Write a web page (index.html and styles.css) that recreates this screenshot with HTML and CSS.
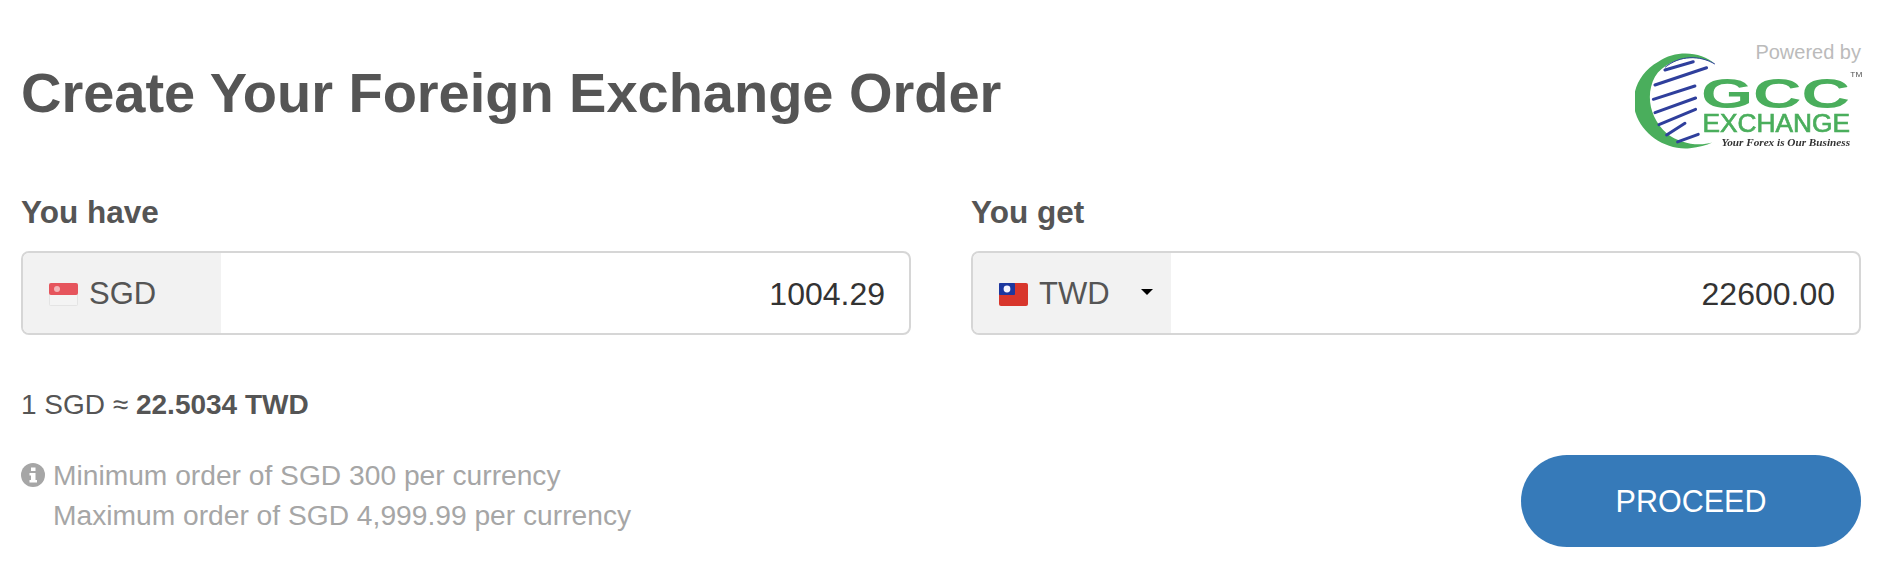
FILE: index.html
```html
<!DOCTYPE html>
<html lang="en">
<head>
    <meta charset="UTF-8">
    <meta name="viewport" content="width=device-width, initial-scale=1.0">
    <title>Create Your Foreign Exchange Order</title>
    <link rel="stylesheet" href="styles.css">
</head>
<body>
    <div class="order">
        <div class="header">
            <h1>Create Your Foreign Exchange Order</h1>
            <div class="powered">
                <span class="powered-text">Powered by</span>
                <svg class="logo" viewBox="100 90 700 300">
                    <path d="M340 132C300 95 225 88 170 125C108 160 85 225 102 280C122 345 195 392 265 385C292 382 315 377 332 368C290 380 235 372 195 340C145 296 130 225 160 170C192 118 280 95 340 132Z" fill="#4aae5c"/>
                    <path d="M190 142C235 105 295 105 340 132" fill="none" stroke="#2f3f9c" stroke-width="3"/>
                    <g stroke="#2f3f9c" stroke-width="9" stroke-linecap="round">
                        <line x1="190" y1="150" x2="275" y2="125"/>
                        <line x1="160" y1="195" x2="315" y2="143"/>
                        <line x1="155" y1="238" x2="280" y2="198"/>
                        <line x1="160" y1="278" x2="282" y2="234"/>
                        <line x1="172" y1="314" x2="282" y2="268"/>
                        <line x1="195" y1="345" x2="250" y2="310"/>
                        <line x1="228" y1="366" x2="290" y2="343"/>
                    </g>
                    <text class="logo-gcc" x="298" y="264" textLength="448" lengthAdjust="spacingAndGlyphs">GCC</text>
                    <text class="logo-exchange" x="303" y="335" textLength="443" lengthAdjust="spacingAndGlyphs">EXCHANGE</text>
                    <text class="logo-tag" x="360" y="378" textLength="386" lengthAdjust="spacingAndGlyphs">Your Forex is Our Business</text>
                    <text class="logo-tm" x="747" y="170" textLength="36" lengthAdjust="spacingAndGlyphs">TM</text>
                </svg>
            </div>
        </div>

        <div class="fields">
            <div class="field">
                <label>You have</label>
                <div class="input-group">
                    <div class="addon">
                        <svg class="flag" viewBox="0 0 29 23">
                            <rect width="29" height="23" rx="2" fill="#e4e4e4"/>
                            <rect x="1" y="12" width="27" height="10" fill="#f4f4f4"/>
                            <rect width="29" height="12" rx="2" fill="#e6555d"/>
                            <circle cx="8" cy="6" r="3" fill="#f3b5b8"/>
                        </svg>
                        <span>SGD</span>
                    </div>
                    <div class="amount">1004.29</div>
                </div>
            </div>
            <div class="field">
                <label>You get</label>
                <div class="input-group">
                    <div class="addon">
                        <svg class="flag" viewBox="0 0 29 23">
                            <rect width="29" height="23" rx="2" fill="#d8362c"/>
                            <rect width="16" height="12" rx="1" fill="#1c379f"/>
                            <circle cx="8" cy="6" r="3.4" fill="#f4f4ff"/>
                        </svg>
                        <span>TWD</span>
                        <span class="caret"></span>
                    </div>
                    <div class="amount">22600.00</div>
                </div>
            </div>
        </div>

        <div class="footer">
            <div class="notes">
                <p class="rate">1 SGD ≈ <b>22.5034 TWD</b></p>
                <div class="limits">
                    <svg class="info" viewBox="0 0 24 24">
                        <circle cx="12" cy="12" r="12" fill="#a6a6a6"/>
                        <rect x="10" y="4.5" width="4.5" height="3.5" fill="#fff"/>
                        <path d="M8.5 10H14.5V17H16V19.5H8.5V17H10V12.5H8.5Z" fill="#fff"/>
                    </svg>
                    <p>Minimum order of SGD 300 per currency<br>Maximum order of SGD 4,999.99 per currency</p>
                </div>
            </div>
            <button class="proceed">PROCEED</button>
        </div>
    </div>
</body>
</html>
```

FILE: styles.css
```css
body {
    font-family: "Liberation Sans", Arial, sans-serif;
    background-color: #fff;
    color: #555;
    margin: 0;
}
p {
    margin: 0;
}
.order {
    padding: 0 16px 0 21px;
}
.header {
    display: flex;
    justify-content: space-between;
    align-items: flex-start;
    height: 194px;
}
h1 {
    margin: 59px 0 0;
    font-size: 56px;
    line-height: 68px;
    font-weight: bold;
    letter-spacing: -0.03px;
}
.powered {
    display: flex;
    flex-direction: column;
    align-items: flex-end;
    padding-top: 41px;
}
.powered-text {
    font-size: 20px;
    line-height: 22px;
    color: #bbb;
}
.logo {
    width: 233px;
    height: 100px;
    margin-top: -13px;
    margin-right: -7px;
    filter: blur(0.5px);
}
.logo-gcc {
    font: bold 128px "Liberation Sans", sans-serif;
    fill: #4aae5c;
}
.logo-exchange {
    font: 76px "Liberation Sans", sans-serif;
    fill: #4aae5c;
    stroke: #4aae5c;
    stroke-width: 2px;
}
.logo-tag {
    font: italic bold 28px "Liberation Serif", serif;
    fill: #333;
}
.logo-tm {
    font: 22px "Liberation Sans", sans-serif;
    fill: #555;
}
.fields {
    display: grid;
    grid-template-columns: 1fr 1fr;
    column-gap: 60px;
}
label {
    display: block;
    font-size: 31.5px;
    line-height: 36px;
    font-weight: bold;
    margin-bottom: 21px;
}
.input-group {
    display: flex;
    height: 84px;
    box-sizing: border-box;
    border: 2px solid #d6d6d6;
    border-radius: 8px;
    overflow: hidden;
    font-size: 31px;
}
.addon {
    width: 198px;
    padding: 2px 0 0 26px;
    box-sizing: border-box;
    display: flex;
    align-items: center;
    background-color: #f2f2f2;
}
.flag {
    width: 29px;
    height: 23px;
    margin-right: 11px;
    filter: blur(0.4px);
}
.caret {
    margin-left: 31px;
    margin-bottom: 5px;
    border-top: 6px solid #000;
    border-left: 6px solid transparent;
    border-right: 6px solid transparent;
}
.amount {
    flex: 1;
    display: flex;
    align-items: center;
    justify-content: flex-end;
    padding: 2px 24px 0 0;
    font-size: 32px;
    color: #333;
}
.footer {
    display: flex;
    justify-content: space-between;
    align-items: flex-start;
}
.rate {
    font-size: 28px;
    line-height: 32px;
    margin-top: 54px;
}
.limits {
    display: flex;
    gap: 8px;
    margin-top: 34px;
    font-size: 28.2px;
    line-height: 40px;
    color: #a6a6a6;
}
.info {
    width: 24px;
    height: 24px;
    margin-top: 8px;
}
.proceed {
    width: 340px;
    height: 92px;
    margin-top: 120px;
    font-family: inherit;
    font-size: 30.5px;
    color: #fff;
    background-color: #367ab9;
    border: none;
    border-radius: 46px;
    cursor: pointer;
}
```
